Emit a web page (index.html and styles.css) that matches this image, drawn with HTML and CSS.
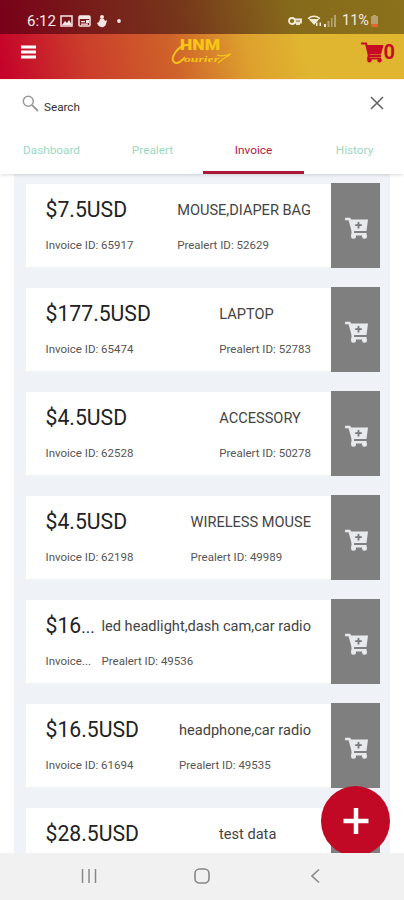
FILE: index.html
```html
<!DOCTYPE html>
<html lang="en">
<head>
  <meta charset="UTF-8">
  <meta name="viewport" content="width=device-width, initial-scale=1.0">
  <title>HNM Courier - Invoice</title>
  <link rel="stylesheet" href="styles.css">
</head>
<body>
  <!-- Shared cart icon for the invoice buttons -->
  <svg class="hidden">
    <symbol id="cart-plus" viewBox="0 0 24 22">
      <path d="M0 2h4.500l3.500 13" fill="none" stroke="#e8e9ec" stroke-width="2.400"/>
      <path d="M5 2.500h18L21.500 14H7.500z" fill="#e8e9ec"/>
      <path d="M8 14l-.5 3.300h14" fill="none" stroke="#e8e9ec" stroke-width="2.400"/>
      <circle cx="8.500" cy="19.300" r="2.500" fill="#e8e9ec"/>
      <circle cx="19.500" cy="19.300" r="2.500" fill="#e8e9ec"/>
      <path d="M13.500 5v6.500M10.200 8.200h6.600" stroke="#777" stroke-width="1.800"/>
    </symbol>
  </svg>

  <div class="app">
    <div class="statusbar">
      <span class="time">6:12</span>
      <svg class="notifications" width="64" height="14" viewBox="0 0 64 14">
        <g fill="none" stroke="#f3e6e4" stroke-width="1.500">
          <rect x="1" y="2" width="11" height="10"/>
          <rect x="19" y="2" width="11" height="10" rx="1"/>
        </g>
        <g fill="#f3e6e4">
          <path d="M2 11l3-4 2 2 2-3 3 5zM19 2h11v3H19zM21 7h4v1.300h-4zM21 9.500h7v1.300h-7zM26 6h3v3h-3z"/>
          <circle cx="42" cy="3" r="2"/>
          <path d="M40 5h4l1 2 2-1-1 4c-1 4-6 4-8 1l-1-2 2-1z"/>
          <circle cx="59" cy="7" r="1.900"/>
        </g>
      </svg>
      <svg class="signals" width="49" height="14" viewBox="0 0 49 14">
        <g fill="none" stroke="#f2ecd9" stroke-width="1.800">
          <circle cx="4" cy="7" r="3"/>
          <path d="M7 5.500h6v3h-2v1.500H9V8.500H7"/>
          <path d="M20 4.500q6-4.500 12 0M22.500 7q3.500-2.500 7 0" stroke-width="1.500"/>
        </g>
        <path d="M20 4l6 7 6-7-6 2zM28 8.500h1.500V12H28zM31.500 8.500H33V12h-1.500zM36 10h2v3h-2z" fill="#f2ecd9"/>
        <path d="M39.500 7h2v6h-2zM43 4h1.500v9H43zM46 1h2v12h-2z" fill="#b3a274"/>
      </svg>
      <span class="percent">11%</span>
      <svg class="battery" width="9" height="14" viewBox="0 0 9 14">
        <path d="M3 1h3v1h2v8H1V2h2z" fill="#b5a16f"/>
        <path d="M1 10h7v3H1z" fill="#e2662c"/>
      </svg>
    </div>

    <header class="header">
      <svg class="menu" width="15" height="14" viewBox="0 0 15 14">
        <path d="M0 2h15M0 7h15M0 12h15" stroke="#fff" stroke-width="2.800"/>
      </svg>
      <svg class="logo" width="64" height="32" viewBox="0 0 64 32">
        <text class="logo-name" x="9" y="14" textLength="40" lengthAdjust="spacingAndGlyphs">HNM</text>
        <path d="M15 9C6 11 -1 22 3 26c3 3 8-1 11-5" fill="none" stroke="#f7c717" stroke-width="1.800"/>
        <text class="logo-script" x="13" y="26" textLength="35" lengthAdjust="spacingAndGlyphs">ourier</text>
        <path d="M46 19q5 2 14-1-6 3-13 9" fill="none" stroke="#f7c717" stroke-width="1.200"/>
      </svg>
      <div class="cart">
        <svg width="23" height="21" viewBox="0 0 23 21">
          <path d="M0 1.500h5l3 12.500h12" fill="none" stroke="#c70b25" stroke-width="2"/>
          <path d="M5 3h17.500L20 12.500H7.500z" fill="#c70b25"/>
          <path d="M8 13l-1 3.500h13" fill="none" stroke="#c70b25" stroke-width="2"/>
          <circle cx="8.500" cy="18.300" r="2.200" fill="#c70b25"/>
          <circle cx="18.500" cy="18.300" r="2.200" fill="#c70b25"/>
        </svg>
        <span>0</span>
      </div>
    </header>

    <div class="search">
      <svg width="17" height="17" viewBox="0 0 17 17">
        <circle cx="6.300" cy="6.300" r="5" fill="none" stroke="#999" stroke-width="1.500"/>
        <path d="M10 10l6 6" stroke="#999" stroke-width="1.800"/>
      </svg>
      <span class="search-text">Search</span>
      <svg width="14" height="14" viewBox="0 0 14 14">
        <path d="M1 1l12 12M13 1L1 13" stroke="#666" stroke-width="1.600"/>
      </svg>
    </div>

    <nav class="tabs">
      <a class="tab">Dashboard</a>
      <a class="tab">Prealert</a>
      <a class="tab active">Invoice</a>
      <a class="tab">History</a>
    </nav>

    <main class="list">
      <div class="card">
        <div class="info">
          <div class="left"><p class="price">$7.5USD</p><p class="id">Invoice ID: 65917</p></div>
          <div class="right"><p class="name">MOUSE,DIAPER BAG</p><p class="id">Prealert ID: 52629</p></div>
        </div>
        <div class="add"><svg width="24" height="22"><use href="#cart-plus"/></svg></div>
      </div>
      <div class="card">
        <div class="info">
          <div class="left"><p class="price">$177.5USD</p><p class="id">Invoice ID: 65474</p></div>
          <div class="right"><p class="name">LAPTOP</p><p class="id">Prealert ID: 52783</p></div>
        </div>
        <div class="add"><svg width="24" height="22"><use href="#cart-plus"/></svg></div>
      </div>
      <div class="card">
        <div class="info">
          <div class="left"><p class="price">$4.5USD</p><p class="id">Invoice ID: 62528</p></div>
          <div class="right"><p class="name">ACCESSORY</p><p class="id">Prealert ID: 50278</p></div>
        </div>
        <div class="add"><svg width="24" height="22"><use href="#cart-plus"/></svg></div>
      </div>
      <div class="card">
        <div class="info">
          <div class="left"><p class="price">$4.5USD</p><p class="id">Invoice ID: 62198</p></div>
          <div class="right"><p class="name">WIRELESS MOUSE</p><p class="id">Prealert ID: 49989</p></div>
        </div>
        <div class="add"><svg width="24" height="22"><use href="#cart-plus"/></svg></div>
      </div>
      <div class="card">
        <div class="info">
          <div class="left"><p class="price">$16<span class="dots">...</span></p><p class="id">Invoice...</p></div>
          <div class="right"><p class="name">led headlight,dash cam,car radio</p><p class="id">Prealert ID: 49536</p></div>
        </div>
        <div class="add"><svg width="24" height="22"><use href="#cart-plus"/></svg></div>
      </div>
      <div class="card">
        <div class="info">
          <div class="left"><p class="price">$16.5USD</p><p class="id">Invoice ID: 61694</p></div>
          <div class="right"><p class="name">headphone,car radio</p><p class="id">Prealert ID: 49535</p></div>
        </div>
        <div class="add"><svg width="24" height="22"><use href="#cart-plus"/></svg></div>
      </div>
      <div class="card last">
        <div class="info">
          <div class="left"><p class="price">$28.5USD</p></div>
          <div class="right"><p class="name">test data</p></div>
        </div>
        <div class="add"></div>
      </div>
      <div class="fab">
        <svg width="26" height="26" viewBox="0 0 26 26">
          <path d="M13 0v26M0.500 13h25" stroke="#fff" stroke-width="4.500"/>
        </svg>
      </div>
    </main>

    <footer class="navbar">
      <svg width="16" height="16" viewBox="0 0 16 16">
        <path d="M1.500 1v14M8 1v14M14.500 1v14" stroke="#888" stroke-width="1.500"/>
      </svg>
      <svg width="16" height="16" viewBox="0 0 16 16">
        <rect x="1" y="1" width="14" height="14" rx="4.500" fill="none" stroke="#888" stroke-width="1.600"/>
      </svg>
      <svg width="16" height="16" viewBox="0 0 16 16">
        <path d="M12 1.500L5 8l7 6.500" fill="none" stroke="#888" stroke-width="1.600"/>
      </svg>
    </footer>
  </div>
</body>
</html>
```
FILE: styles.css
```css
* {
  box-sizing: border-box;
}
body {
  font-family: Roboto, sans-serif;
  margin: 0;
  background-color: #fff;
  color: #222;
}
p {
  margin: 0;
  white-space: nowrap;
}
svg {
  display: block;
  flex-shrink: 0;
}
.hidden {
  position: absolute;
  width: 0;
  height: 0;
}
.app {
  display: flex;
  flex-direction: column;
  height: 900px;
  overflow: hidden;
}
.statusbar {
  display: flex;
  align-items: center;
  height: 34px;
  padding: 7px 25px 0 27px;
  background: linear-gradient(78deg, #790019 0%, #76371b 45%, #866a1b 72%, #8b711b 100%);
  color: #f5ebe4;
  font-size: 15px;
}
.time {
  width: 33px;
}
.signals {
  margin-left: auto;
}
.percent {
  width: 27px;
  margin-left: 5px;
  font-size: 14.5px;
}
.battery {
  margin-left: 1px;
}
.header {
  display: flex;
  align-items: center;
  height: 45px;
  padding: 0 9px 9px 21px;
  background: linear-gradient(78deg, #c5002a 0%, #cb3e2b 22%, #cf622a 43%, #dda02e 61%, #e0b530 75%, #e0b630 100%);
}
.logo {
  margin-left: 135px;
}
.logo-name {
  font: 900 15px Roboto, sans-serif;
  fill: #f7c717;
}
.logo-script {
  font: italic bold 9px "Liberation Serif", serif;
  fill: #f7c717;
}
.cart {
  display: flex;
  align-items: center;
  margin-left: auto;
  color: #c70b25;
  font-size: 20px;
  font-weight: bold;
}
.search {
  display: flex;
  align-items: center;
  height: 49px;
  padding: 0 20px 2px 22px;
  border-top: 1px solid #fdf0e2;
}
.search-text {
  flex: 1;
  margin: 8px 0 0 5px;
  color: #333;
  font-size: 11.7px;
}
.tabs {
  position: relative;
  z-index: 1;
  display: grid;
  grid-template-columns: repeat(4, 101px);
  height: 46px;
  padding-left: 1px;
  background-color: #fff;
  box-shadow: 0 2px 3px -1px rgba(0,0,0,0.15);
}
.tab {
  height: 46px;
  border-bottom: 3px solid transparent;
  color: #9bd8c3;
  font-size: 11.8px;
  line-height: 44px;
  text-align: center;
}
.tab.active {
  border-color: #ad1837;
  color: #b5193a;
}
.list {
  position: relative;
  flex: 1;
  min-height: 0;
  margin: 0 14px;
  padding: 9px 10px 0 12px;
  background-color: #eff3f7;
  overflow: hidden;
}
.card {
  display: flex;
  height: 85px;
  margin-bottom: 19px;
}
.info {
  display: flex;
  justify-content: space-between;
  width: 305px;
  height: 83px;
  margin-top: 1px;
  padding: 12px 20px 0 19.5px;
  background-color: #fff;
}
.add {
  display: flex;
  align-items: center;
  justify-content: center;
  width: 49px;
  padding: 5px 0 0 2px;
  background-color: #7f7f7f;
}
.price {
  height: 28px;
  font-size: 21.2px;
  line-height: 28px;
}
.dots {
  font-size: 17px;
}
.name {
  height: 28px;
  color: #444;
  font-size: 14.6px;
  line-height: 28px;
}
.id {
  margin-top: 11px;
  color: #555;
  font-size: 11.5px;
  line-height: 20px;
}
.last .right {
  width: 92px;
}
.fab {
  position: absolute;
  right: 0;
  top: 612px;
  display: flex;
  align-items: center;
  justify-content: center;
  width: 69px;
  height: 70px;
  border-radius: 50%;
  background-color: #c10825;
}
.navbar {
  display: flex;
  justify-content: space-between;
  height: 47px;
  padding: 15px 81px 0;
  background-color: #f1f1f1;
}
```
